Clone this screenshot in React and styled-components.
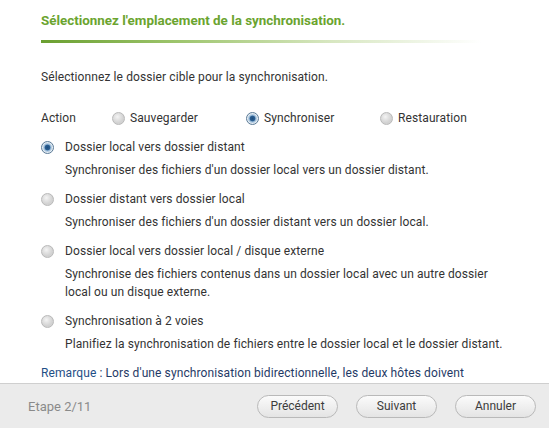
import React, { useState } from 'react'
import styled, { createGlobalStyle } from 'styled-components'

const GlobalStyle = createGlobalStyle`
  html, body {
    margin: 0;
    padding: 0;
    background: #fff;
  }
  body {
    font-family: Roboto, "Liberation Sans", Arial, sans-serif;
  }
`

const Wizard = styled.div`
  width: 549px;
  height: 428px;
  display: flex;
  flex-direction: column;
  background: #fff;
  overflow: hidden;
`

const Content = styled.div`
  flex: 1;
  overflow: hidden;
  padding: 11px 0 0 41px;
  color: #333;
  font-size: 12px;
  letter-spacing: 0.1px;
`

const Title = styled.h1`
  margin: 0;
  font-size: 13.4px;
  font-weight: bold;
  color: #6ba42f;
  line-height: 19px;
  letter-spacing: 0;
`

const TitleRule = styled.div`
  margin-top: 10px;
  width: 440px;
  height: 3px;
  background: linear-gradient(to right, #6a9f30 0%, #9cc46b 30%, #d6e6bf 65%, rgba(255, 255, 255, 0) 100%);
`

const Intro = styled.p`
  margin: 26px 0 0;
  line-height: 16px;
`

const ActionRow = styled.div`
  display: flex;
  align-items: center;
  margin-top: 24px;
  height: 18px;
`

const ActionLabel = styled.span`
  width: 71px;
`

const ActionChoice = styled.label`
  display: flex;
  align-items: center;
  gap: 5px;
  width: 134px;
`

const Radio = styled.span`
  flex: none;
  box-sizing: border-box;
  width: 13px;
  height: 13px;
  border-radius: 50%;
  border: 1px solid ${p => (p.$checked ? '#5a7a96' : '#b9b9b9')};
  background: ${p =>
    p.$checked
      ? 'radial-gradient(circle, #1d4d7e 0, #2b5f92 2.5px, #8fb3d3 3.2px, #e4ecf3 5px)'
      : 'radial-gradient(circle at 40% 35%, #f4f4f4 0, #e2e2e2 3px, #d2d2d2 6px)'};
`

const Options = styled.div`
  margin-top: 11px;
  display: flex;
  flex-direction: column;
  gap: 11px;
`

const Option = styled.div`
  display: flex;
  flex-direction: column;
`

const OptionHead = styled.label`
  display: flex;
  align-items: center;
  gap: 11px;
  height: 18px;
`

const OptionDesc = styled.div`
  margin: 5px 0 0 24px;
  line-height: 18px;
  width: 440px;
`

const Note = styled.p`
  margin: 11px 0 0;
  line-height: 18px;
  color: #1f3a66;
  width: 440px;
`

const NoteKey = styled.span`
  color: #1f4f86;
`

const Footer = styled.div`
  flex: none;
  height: 45px;
  box-sizing: border-box;
  border-top: 1px solid #cfcfcf;
  background: #ebebeb;
  display: flex;
  align-items: center;
  padding: 0 13px 0 28px;
`

const Step = styled.span`
  flex: 1;
  font-size: 13px;
  color: #8a8a8a;
`

const Buttons = styled.div`
  display: flex;
  gap: 18px;
`

const Button = styled.button`
  width: 81px;
  height: 23px;
  border-radius: 12px;
  border: 1px solid #b9b9b9;
  background: linear-gradient(#fbfbfb, #e4e4e4);
  font-family: inherit;
  font-size: 12px;
  color: #3c3c3c;
  padding: 0;
  cursor: pointer;
`

const actions = ['Sauvegarder', 'Synchroniser', 'Restauration']

const modes = [
  {
    label: 'Dossier local vers dossier distant',
    desc: "Synchroniser des fichiers d'un dossier local vers un dossier distant.",
  },
  {
    label: 'Dossier distant vers dossier local',
    desc: "Synchroniser des fichiers d'un dossier distant vers un dossier local.",
  },
  {
    label: 'Dossier local vers dossier local / disque externe',
    desc: 'Synchronise des fichiers contenus dans un dossier local avec un autre dossier local ou un disque externe.',
  },
  {
    label: 'Synchronisation à 2 voies',
    desc: 'Planifiez la synchronisation de fichiers entre le dossier local et le dossier distant.',
  },
]

export default function App() {
  const [action, setAction] = useState(1)
  const [mode, setMode] = useState(0)

  return (
    <>
      <GlobalStyle />
      <Wizard>
        <Content>
          <Title>Sélectionnez l'emplacement de la synchronisation.</Title>
          <TitleRule />
          <Intro>Sélectionnez le dossier cible pour la synchronisation.</Intro>
          <ActionRow>
            <ActionLabel>Action</ActionLabel>
            {actions.map((a, i) => (
              <ActionChoice key={a} onClick={() => setAction(i)}>
                <Radio $checked={action === i} />
                {a}
              </ActionChoice>
            ))}
          </ActionRow>
          <Options>
            {modes.map((m, i) => (
              <Option key={m.label}>
                <OptionHead onClick={() => setMode(i)}>
                  <Radio $checked={mode === i} />
                  {m.label}
                </OptionHead>
                <OptionDesc>{m.desc}</OptionDesc>
              </Option>
            ))}
          </Options>
          <Note>
            <NoteKey>Remarque</NoteKey> : Lors d'une synchronisation bidirectionnelle, les deux hôtes doivent
            prendre en charge la fonctionnalité rsync 3.X. Et ils doivent également avoir la même heure système.
          </Note>
        </Content>
        <Footer>
          <Step>Etape 2/11</Step>
          <Buttons>
            <Button>Précédent</Button>
            <Button>Suivant</Button>
            <Button>Annuler</Button>
          </Buttons>
        </Footer>
      </Wizard>
    </>
  )
}
